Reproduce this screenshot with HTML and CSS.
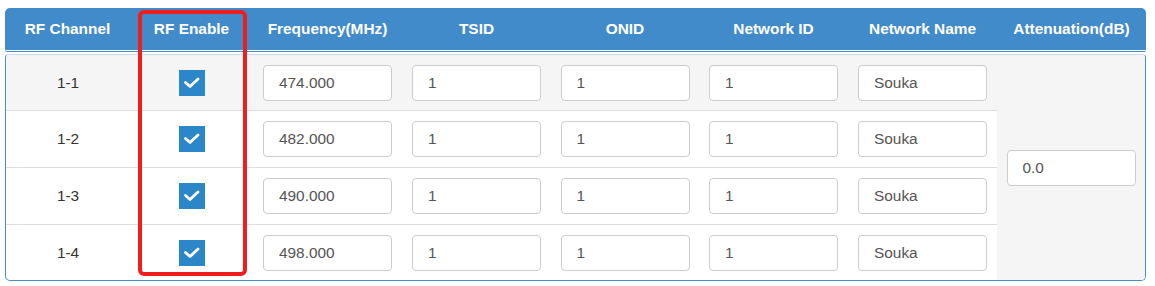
FILE: index.html
```html
<!DOCTYPE html>
<html>
<head>
<meta charset="utf-8">
<link rel="stylesheet" href="styles.css">
</head>
<body>
<div class="wrap">
  <div class="head">
    <div class="hc">RF Channel</div>
    <div class="hc">RF Enable</div>
    <div class="hc">Frequency(MHz)</div>
    <div class="hc">TSID</div>
    <div class="hc">ONID</div>
    <div class="hc">Network ID</div>
    <div class="hc">Network Name</div>
    <div class="hc">Attenuation(dB)</div>
  </div>
  <div class="body">
    <div class="c r1 hover">1-1</div>
    <div class="c r1 hover"><span class="cb"><svg viewBox="0 0 26 26" width="26" height="26"><polyline points="6.5,12.5 11,16.5 19,9" fill="none" stroke="#fff" stroke-width="2.8" stroke-linecap="round" stroke-linejoin="round"/></svg></span></div>
    <div class="c r1 hover"><div class="inp">474.000</div></div>
    <div class="c r1 hover"><div class="inp">1</div></div>
    <div class="c r1 hover"><div class="inp">1</div></div>
    <div class="c r1 hover"><div class="inp">1</div></div>
    <div class="c r1 hover"><div class="inp">Souka</div></div>
    <div class="att"><div class="inp">0.0</div></div>

    <div class="c r2 sep">1-2</div>
    <div class="c r2 sep"><span class="cb"><svg viewBox="0 0 26 26" width="26" height="26"><polyline points="6.5,12.5 11,16.5 19,9" fill="none" stroke="#fff" stroke-width="2.8" stroke-linecap="round" stroke-linejoin="round"/></svg></span></div>
    <div class="c r2 sep"><div class="inp">482.000</div></div>
    <div class="c r2 sep"><div class="inp">1</div></div>
    <div class="c r2 sep"><div class="inp">1</div></div>
    <div class="c r2 sep"><div class="inp">1</div></div>
    <div class="c r2 sep"><div class="inp">Souka</div></div>

    <div class="c r3 sep">1-3</div>
    <div class="c r3 sep"><span class="cb"><svg viewBox="0 0 26 26" width="26" height="26"><polyline points="6.5,12.5 11,16.5 19,9" fill="none" stroke="#fff" stroke-width="2.8" stroke-linecap="round" stroke-linejoin="round"/></svg></span></div>
    <div class="c r3 sep"><div class="inp">490.000</div></div>
    <div class="c r3 sep"><div class="inp">1</div></div>
    <div class="c r3 sep"><div class="inp">1</div></div>
    <div class="c r3 sep"><div class="inp">1</div></div>
    <div class="c r3 sep"><div class="inp">Souka</div></div>

    <div class="c r4 sep">1-4</div>
    <div class="c r4 sep"><span class="cb"><svg viewBox="0 0 26 26" width="26" height="26"><polyline points="6.5,12.5 11,16.5 19,9" fill="none" stroke="#fff" stroke-width="2.8" stroke-linecap="round" stroke-linejoin="round"/></svg></span></div>
    <div class="c r4 sep"><div class="inp">498.000</div></div>
    <div class="c r4 sep"><div class="inp">1</div></div>
    <div class="c r4 sep"><div class="inp">1</div></div>
    <div class="c r4 sep"><div class="inp">1</div></div>
    <div class="c r4 sep"><div class="inp">Souka</div></div>
  </div>
  <div class="mark"></div>
</div>
</body>
</html>
```
FILE: styles.css
```css
html, body {
  margin: 0;
  padding: 0;
  background: #fff;
}
body {
  font-family: "Liberation Sans", Arial, sans-serif;
  font-size: 15.4px;
  color: #333;
}
.wrap {
  position: relative;
  margin: 8px 0 0 5px;
  width: 1141px;
}
.head {
  display: grid;
  grid-template-columns: 125px 123px 149px 149px 148px 149px 149px 1fr;
  height: 41px;
  background: #428bca;
  background-clip: padding-box;
  border-bottom: 3px double #428bca;
  border-radius: 5px 5px 2px 2px;
}
.hc {
  display: flex;
  align-items: center;
  justify-content: center;
  color: #fff;
  font-weight: bold;
  padding-top: 1px;
}
.body {
  margin-top: 2px;
  display: grid;
  grid-template-columns: 124px 123px 149px 149px 148px 149px 149px 1fr;
  grid-template-rows: 55px 57px 57px 56px;
  border: 1px solid #4a8dcb;
  border-top-color: #c9dcef;
  border-radius: 4px 4px 5px 5px;
  overflow: hidden;
}
.c {
  display: flex;
  align-items: center;
  justify-content: center;
}
.sep {
  border-top: 1px solid #dddddd;
}
.hover {
  background: #f5f5f5;
}
.att {
  grid-column: 8;
  grid-row: 1 / 5;
  background: #f5f5f5;
  display: flex;
  align-items: center;
  justify-content: center;
}
.cb {
  display: block;
  width: 26px;
  height: 26px;
  background: #2b87c7;
  margin-left: 1px;
}
.cb svg {
  display: block;
}
.inp {
  box-sizing: border-box;
  width: 129px;
  height: 36px;
  background: #fff;
  border: 1px solid #cccccc;
  border-radius: 4px;
  padding-left: 15px;
  display: flex;
  align-items: center;
  color: #555;
}
.mark {
  position: absolute;
  left: 133px;
  top: 2px;
  width: 101px;
  height: 258px;
  border: 4px solid #ef1d1d;
  border-radius: 6px;
}
```
